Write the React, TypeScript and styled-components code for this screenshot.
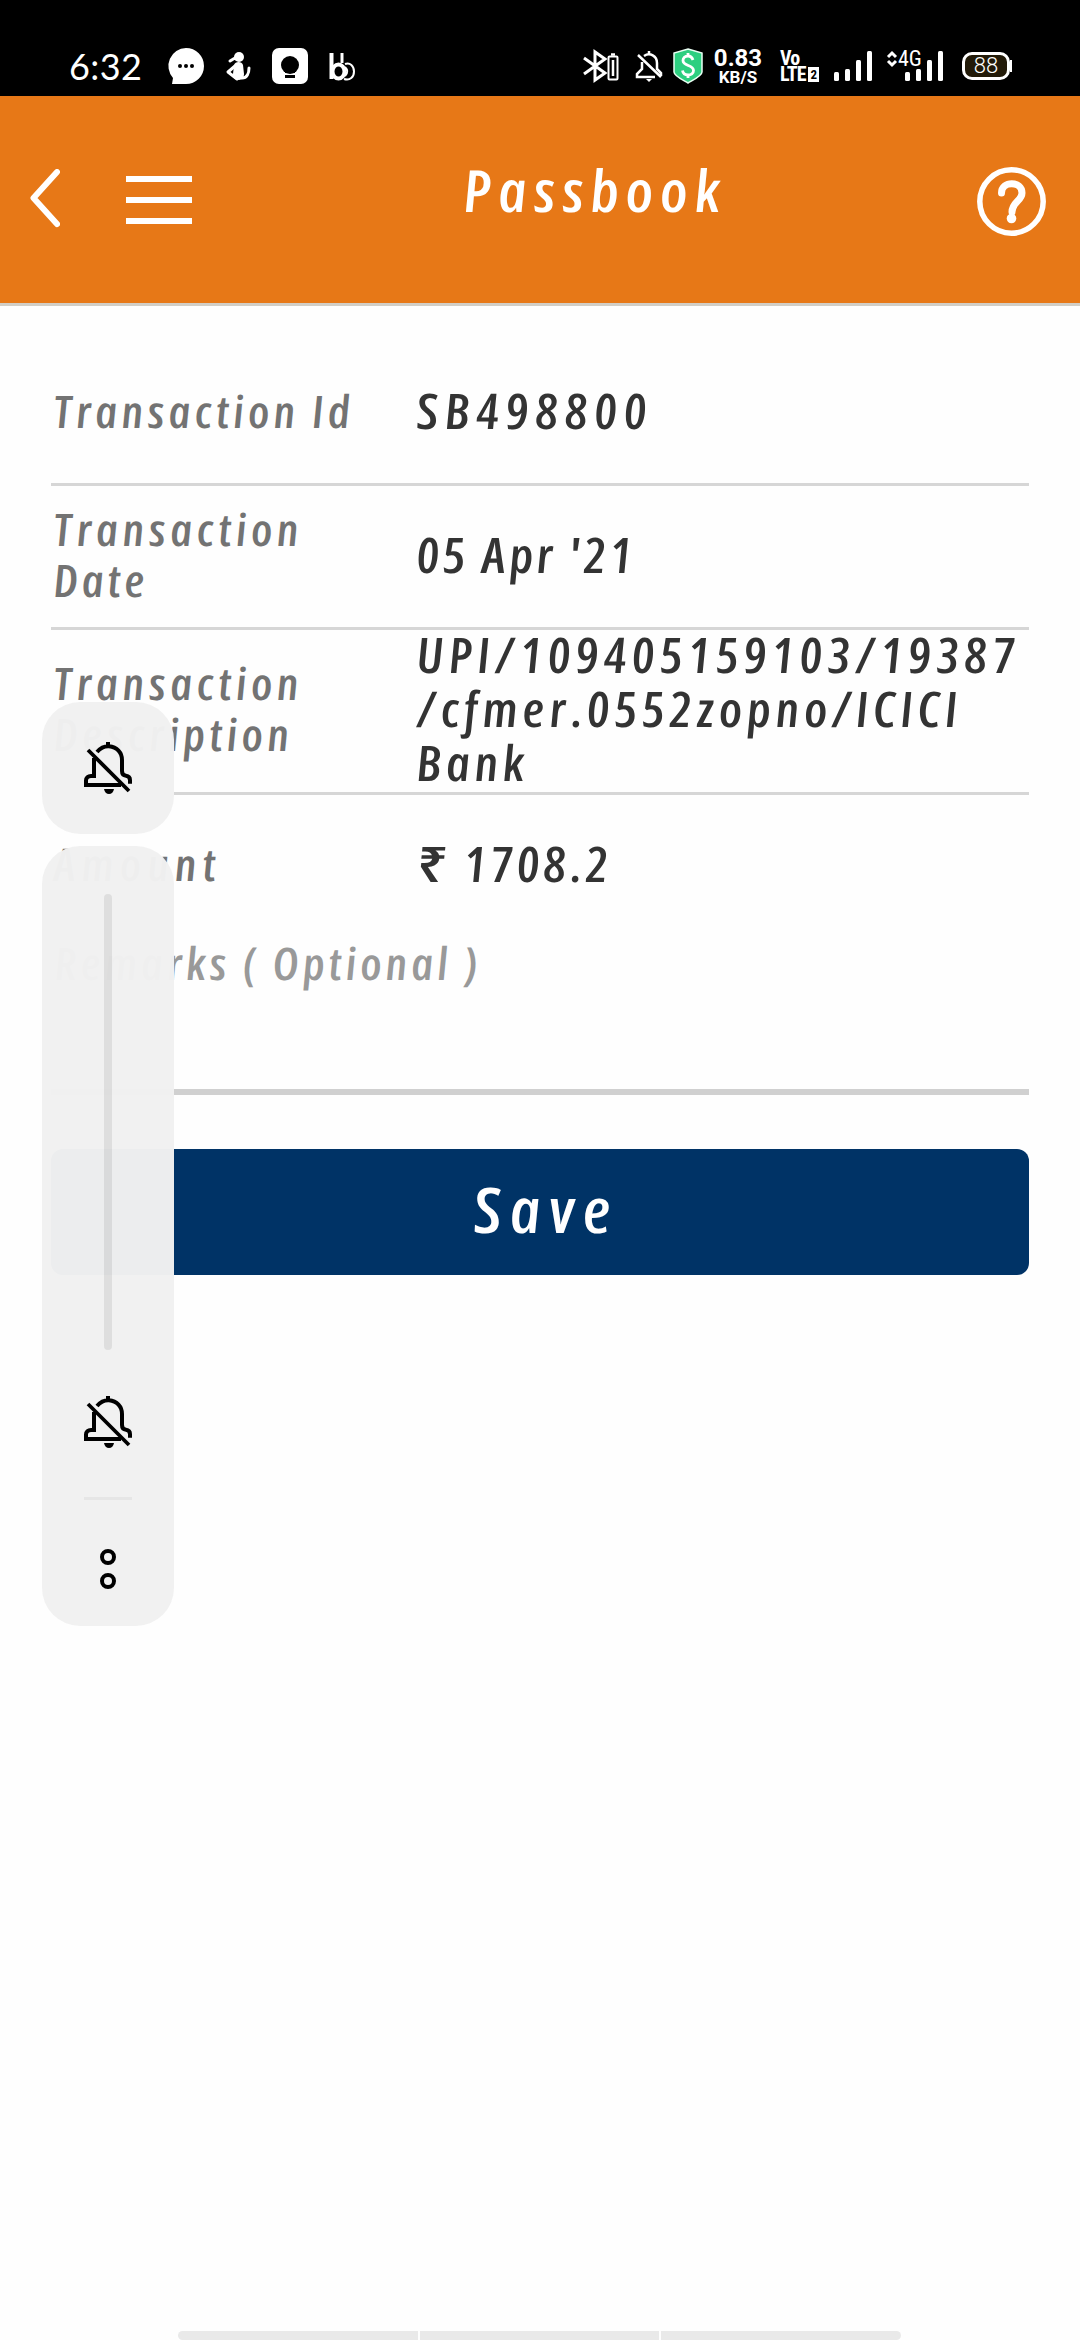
import React from 'react';
import styled, { createGlobalStyle } from 'styled-components';

const GlobalStyle = createGlobalStyle`
  body { margin: 0; background: #fff; }
  * { box-sizing: border-box; }
`;

const Screen = styled.div`
  position: relative;
  display: flex;
  flex-direction: column;
  width: 1080px;
  height: 2340px;
  overflow: hidden;
  background: #fefefe;
`;

const StatusBar = styled.div`
  display: flex;
  align-items: flex-start;
  height: 96px;
  padding: 48px 0 0 69px;
  background: #000;
  color: #fff;
  font-family: Roboto, sans-serif;
`;

const StatusIcon = styled.svg<{ $gap: number }>`
  flex: none;
  margin-left: ${(p) => p.$gap}px;
  overflow: visible;
`;

const Clock = styled.div`
  width: 73px;
  font: 400 36px/36px Lato, sans-serif;
  letter-spacing: 0.4px;
  white-space: nowrap;
`;

const Speed = styled.div`
  display: flex;
  flex-direction: column;
  align-items: center;
  width: 50px;
  margin-left: 10px;
  white-space: nowrap;
`;

const SpeedValue = styled.span`
  font-size: 24px;
  font-weight: 700;
  line-height: 20px;
`;

const SpeedUnit = styled.span`
  font-size: 17px;
  font-weight: 700;
  line-height: 18px;
`;

const Volte = styled.div`
  display: flex;
  flex-direction: column;
  width: 36px;
  margin-left: 17px;
  padding-top: 2px;
  font-size: 20px;
  font-weight: 700;
  font-stretch: 75%;
  letter-spacing: -0.8px;
  line-height: 16px;
`;

const VolteRow = styled.div`
  display: flex;
  align-items: center;
  gap: 2px;
`;

const SimBadge = styled.span`
  flex: none;
  width: 11px;
  height: 15px;
  background: #fff;
  color: #000;
  font-size: 13px;
  line-height: 15px;
  text-align: center;
`;

const NetworkType = styled.span`
  width: 24px;
  margin-left: 1px;
  font-size: 22px;
  font-stretch: 75%;
  line-height: 22px;
`;

const BatteryPill = styled.div`
  display: flex;
  align-items: center;
  justify-content: center;
  width: 48px;
  height: 28px;
  margin: 4px 0 0 19px;
  border: 3px solid #fff;
  border-radius: 10px;
  background: #221a08;
  font-size: 22px;
  font-weight: 300;
  line-height: 22px;
`;

const BatteryNub = styled.div`
  width: 2px;
  height: 12px;
  margin-top: 12px;
  background: #fff;
`;

const Header = styled.header`
  display: flex;
  align-items: center;
  height: 210px;
  padding: 2px 34px 3px 30px;
  background: #e77817;
  border-bottom: 3px solid #d2cec6;
`;

const IconButton = styled.button<{ $left?: number; $drop?: number }>`
  display: flex;
  padding: ${(p) => p.$drop ?? 0}px 0 0;
  margin-left: ${(p) => p.$left ?? 0}px;
  border: 0;
  background: none;
`;

const Script = styled.span<{ $spacing: number }>`
  display: block;
  font-family: 'Open Sans', 'Noto Sans', sans-serif;
  font-style: italic;
  font-stretch: 80%;
  letter-spacing: ${(p) => p.$spacing}px;
  white-space: nowrap;
  transform: skewX(8deg) scaleX(1.12);
  transform-origin: 0 50%;
`;

const Title = styled.h1`
  flex: 1;
  margin: 0 0 18px 271px;
  color: #fff;
  font-size: 58px;
  font-weight: 600;
  line-height: 58px;
`;

const Details = styled.dl`
  margin: 0 51px;
`;

const Row = styled.div<{ $height: number; $top?: number; $last?: boolean }>`
  display: flex;
  align-items: center;
  height: ${(p) => p.$height}px;
  padding: ${(p) => p.$top ?? 0}px 0 6px;
  border-bottom: ${(p) => (p.$last ? 0 : 3)}px solid #d6d6d6;
`;

const Label = styled.dt`
  flex: none;
  width: 365px;
  padding-left: 2px;
  color: #737373;
  font-size: 45px;
  font-weight: 600;
  line-height: 51px;
`;

const Value = styled.dd`
  margin: 0;
  color: #333;
  font-size: 49px;
  font-weight: 600;
  line-height: 54px;
`;

const Remarks = styled.div`
  height: 158px;
  margin: 0 51px;
  padding-left: 3px;
  border-bottom: 6px solid #d0d0d0;
  color: #999;
  font-size: 45px;
  font-weight: 600;
  line-height: 51px;
`;

const SaveButton = styled.button`
  display: flex;
  align-items: center;
  justify-content: center;
  height: 126px;
  margin: 54px 51px 0;
  padding: 0 5px 7px 0;
  border: 0;
  border-radius: 12px;
  background: #003366;
  color: #fff;
  font-size: 63px;
  font-weight: 600;
  line-height: 63px;
`;

const VolumeOverlay = styled.aside`
  position: absolute;
  left: 42px;
  top: 702px;
  display: flex;
  flex-direction: column;
  gap: 12px;
  width: 132px;
`;

const Card = styled.div`
  display: flex;
  flex-direction: column;
  align-items: center;
  border-radius: 38px;
  background: rgba(241, 241, 241, 0.98);
`;

const ModeCard = styled(Card)`
  height: 132px;
  padding-top: 40px;
`;

const SliderCard = styled(Card)`
  height: 780px;
  padding-top: 48px;
`;

const Track = styled.div`
  width: 8px;
  height: 456px;
  margin-bottom: 46px;
  border-radius: 4px;
  background: rgba(0, 0, 0, 0.08);
`;

const Divider = styled.div`
  width: 48px;
  height: 3px;
  margin: 47px 0 49px;
  background: #e6e6e6;
`;

const NavHandle = styled.div`
  display: flex;
  gap: 2px;
  width: 723px;
  height: 9px;
  margin: auto 0 0 178px;
  border-radius: 5px;
  overflow: hidden;
`;

const NavSegment = styled.div`
  flex: 1;
  background: #e9e9e9;
`;

const BellOff = () => (
  <svg width="48" height="54" viewBox="0 0 48 54" fill="none" stroke="#000" strokeWidth="4">
    <path d="M24 0v4M13 10C17 5.500 21 4 25 4.300 33 5 38 10.500 38 18v11c0 3 1.500 4.500 4 4.700 3 .3 4 2 4 4.500v3.500" />
    <path d="M10 16v18H7c-3 0-5 2-5 4.500V43h35" />
    <path d="M4 8l41 41" strokeWidth="3.800" />
    <path d="M20 47h10c-.5 3-2.500 5-5 5s-4.500-2-5-5z" fill="#000" stroke="none" />
  </svg>
);

const Bars = ({ gap }: { gap: number }) => (
  <StatusIcon $gap={gap} width="38" height="36" fill="#fff">
    <rect x="0" y="24" width="5" height="9" rx="1.500" />
    <rect x="11" y="21" width="5" height="12" rx="1.500" />
    <rect x="22" y="12" width="5" height="21" rx="1.500" />
    <rect x="33" y="3" width="5" height="30" rx="1.500" />
  </StatusIcon>
);

const App = () => (
  <Screen>
    <GlobalStyle />
    <StatusBar>
      <Clock>6:32</Clock>
      <StatusIcon $gap={26} width="36" height="36">
        <path d="M18 0a18 18 0 0 1 0 36H4l1-6A18 18 0 0 1 18 0z" fill="#fff" />
        <g fill="#000">
          <circle cx="12" cy="18" r="2" />
          <circle cx="18" cy="18" r="2" />
          <circle cx="24" cy="18" r="2" />
        </g>
      </StatusIcon>
      <StatusIcon $gap={22} width="25" height="36" fill="none" stroke="#fff" strokeLinecap="round" strokeLinejoin="round">
        <circle cx="13" cy="9" r="5" fill="#fff" stroke="none" />
        <path d="M8 17c1-4 8-4 9 0l1 9c0 3-2 6-5 6-4 0-7-3-6-6z" fill="#fff" stroke="none" />
        <path d="M9 10L4 13" strokeWidth="3" />
        <path d="M9 18l-7 6 9 7M16 30c5 0 7-5 7-10" strokeWidth="3" />
      </StatusIcon>
      <StatusIcon $gap={21} width="36" height="36">
        <rect width="36" height="36" rx="7" fill="#fff" />
        <circle cx="18" cy="17" r="9" fill="#000" />
        <rect x="13" y="20" width="10" height="5" fill="#000" />
        <rect x="13" y="27" width="10" height="3" fill="#000" />
      </StatusIcon>
      <StatusIcon $gap={21} width="26" height="36" fill="none" stroke="#fff">
        <path d="M2.500 5v26" strokeWidth="4" />
        <ellipse cx="9.500" cy="23.500" rx="6" ry="7" strokeWidth="4" />
        <path d="M13 5v10" strokeWidth="3" />
        <path d="M16 16c5-2 9 2 9 7.500S21 33 15 31M16 19c3 3 3 6 0 9" strokeWidth="2" />
      </StatusIcon>
      <StatusIcon $gap={228} width="36" height="36" fill="none" stroke="#fff">
        <path d="M1 10l21 15-10 7V4l10 7L1 26" strokeWidth="3" />
        <rect x="25.500" y="8.500" width="9" height="23" rx="1" strokeWidth="2" />
        <path d="M30 12v16M28 6.500h4" strokeWidth="2.500" />
      </StatusIcon>
      <StatusIcon $gap={17} width="26" height="36" fill="none" stroke="#fff" strokeWidth="2.500">
        <path d="M13 3v3M8 8c6-4 13 0 13 7v6l4 4v3M6 14v7l-5 5v3h18M2 7l23 22" />
        <path d="M10 31h6l-3 3z" fill="#fff" stroke="none" />
      </StatusIcon>
      <StatusIcon $gap={11} width="30" height="36">
        <path d="M15 1l14 4v19c0 4-9 8-14 11C10 32 1 28 1 24V5z" fill="#2dcf80" stroke="#e9fff3" strokeWidth="1.500" />
        <path d="M20 12c-1-3-3-4-5-4-3 0-5 2-5 4.500 0 6 10.500 4 10.500 10 0 3-2.500 4.500-5.500 4.500s-5-1.500-5.500-4.500M15 5v4M15 26v4" fill="none" stroke="#fff" strokeWidth="2.800" />
      </StatusIcon>
      <Speed>
        <SpeedValue>0.83</SpeedValue>
        <SpeedUnit>KB/S</SpeedUnit>
      </Speed>
      <Volte>
        <span>Vo</span>
        <VolteRow>LTE<SimBadge>2</SimBadge></VolteRow>
      </Volte>
      <Bars gap={18} />
      <StatusIcon $gap={15} width="10" height="20" fill="none" stroke="#fff" strokeWidth="3">
        <path d="M1 9l4-4 4 4M1 13l4 4 4-4" />
      </StatusIcon>
      <NetworkType>4G</NetworkType>
      <Bars gap={-17} />
      <BatteryPill>88</BatteryPill>
      <BatteryNub />
    </StatusBar>

    <Header>
      <IconButton aria-label="Back">
        <svg width="30" height="60" viewBox="0 0 30 60" fill="none" stroke="#fff" strokeWidth="6" strokeLinecap="round" strokeLinejoin="round">
          <path d="M27 3L3.500 29 27 55" />
        </svg>
      </IconButton>
      <IconButton aria-label="Menu" $left={66} $drop={2}>
        <svg width="66" height="48" fill="#fff">
          <rect width="66" height="6" />
          <rect y="21" width="66" height="6" />
          <rect y="42" width="66" height="6" />
        </svg>
      </IconButton>
      <Title><Script $spacing={6.2}>Passbook</Script></Title>
      <IconButton aria-label="Help" $drop={4}>
        <svg width="69" height="69" viewBox="0 0 69 69" fill="none" stroke="#fff">
          <circle cx="34.500" cy="34.500" r="31.700" strokeWidth="5.500" />
          <path d="M24.500 26c0-12.500 20.500-12.500 20.500 0 0 8-10 9-10 19" strokeWidth="7" strokeLinecap="round" />
          <circle cx="34.500" cy="51.500" r="4.800" fill="#fff" stroke="none" />
        </svg>
      </IconButton>
    </Header>

    <Details>
      <Row $height={180} $top={37}>
        <Label><Script $spacing={3.8}>Transaction Id</Script></Label>
        <Value><Script $spacing={6.2}>SB498800</Script></Value>
      </Row>
      <Row $height={144}>
        <Label>
          <Script $spacing={4.1}>Transaction</Script>
          <Script $spacing={3.4}>Date</Script>
        </Label>
        <Value><Script $spacing={3.2}>05 Apr '21</Script></Value>
      </Row>
      <Row $height={165}>
        <Label>
          <Script $spacing={4.1}>Transaction</Script>
          <Script $spacing={3.9}>Description</Script>
        </Label>
        <Value>
          <Script $spacing={4.9}>UPI/109405159103/19387</Script>
          <Script $spacing={4.4}>/cfmer.0552zopno/ICICI</Script>
          <Script $spacing={4.1}>Bank</Script>
        </Value>
      </Row>
      <Row $height={142} $last>
        <Label><Script $spacing={5.4}>Amount</Script></Label>
        <Value><Script $spacing={3.5}>₹ 1708.2</Script></Value>
      </Row>
    </Details>

    <Remarks><Script $spacing={3.6}>Remarks ( Optional )</Script></Remarks>
    <SaveButton><Script $spacing={7.4}>Save</Script></SaveButton>

    <VolumeOverlay>
      <ModeCard><BellOff /></ModeCard>
      <SliderCard>
        <Track />
        <BellOff />
        <Divider />
        <svg width="16" height="40" viewBox="0 0 16 40" fill="none" stroke="#000" strokeWidth="4">
          <circle cx="8" cy="8" r="6" />
          <circle cx="8" cy="32" r="6" />
        </svg>
      </SliderCard>
    </VolumeOverlay>

    <NavHandle>
      <NavSegment />
      <NavSegment />
      <NavSegment />
    </NavHandle>
  </Screen>
);

export default App;
